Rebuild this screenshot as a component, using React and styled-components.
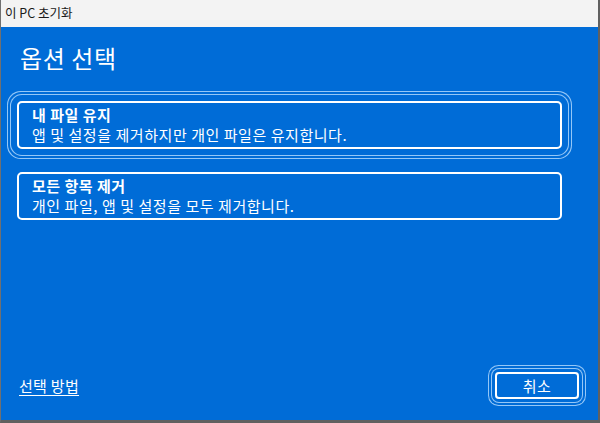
import styled, { createGlobalStyle } from "styled-components";

const BLUE = "#006cd7";
const RING = "#94c7f7";

const GlobalStyle = createGlobalStyle`
  html, body {
    margin: 0;
    padding: 0;
    background: #ffffff;
  }
  * {
    box-sizing: border-box;
  }
`;

// 창 전체
const Window = styled.div`
  width: 600px;
  height: 423px;
  display: flex;
  flex-direction: column;
  border-left: 1px solid #707070;
  border-right: 2px solid #606060;
  border-bottom: 3px solid #606060;
  font-family: "Noto Sans CJK KR", "Noto Sans", sans-serif;
  overflow: hidden;
`;

const TitleBar = styled.div`
  height: 27px;
  flex-shrink: 0;
  display: flex;
  align-items: center;
  padding-left: 4px;
  padding-bottom: 3px;
  background: #f3f3f3;
  color: #1a1a1a;
  font-size: 12.5px;
`;

const Body = styled.div`
  flex: 1;
  display: flex;
  flex-direction: column;
  background: ${BLUE};
  color: #ffffff;
  padding: 14px 36px 21px 16px;
`;

const Heading = styled.h1`
  margin: 0 0 26px 3px;
  font-size: 24px;
  font-weight: 400;
  line-height: 34px;
  letter-spacing: 0.6px;
`;

const OptionList = styled.div`
  display: flex;
  flex-direction: column;
  gap: 23px;
`;

const OptionCard = styled.button`
  display: flex;
  flex-direction: column;
  align-items: flex-start;
  width: 100%;
  height: 48px;
  padding: 2px 13px 0;
  background: transparent;
  color: #ffffff;
  border: 2px solid #ffffff;
  border-radius: 5px;
  font-family: inherit;
  text-align: left;
  cursor: pointer;
  box-shadow: ${(p) =>
    p.$focused
      ? `0 0 0 6px ${BLUE}, 0 0 0 7px ${RING}, 0 0 0 9px ${BLUE}, 0 0 0 10px ${RING}`
      : "none"};
`;

const OptionTitle = styled.div`
  font-size: 15px;
  font-weight: 700;
  line-height: 20px;
  letter-spacing: 0.5px;
`;

const OptionDesc = styled.div`
  font-size: 15px;
  line-height: 20px;
  letter-spacing: 0.55px;
`;

const Footer = styled.div`
  margin-top: auto;
  display: flex;
  align-items: center;
  justify-content: space-between;
  margin-right: -17px;
`;

const HelpLink = styled.a`
  margin-left: 2px;
  color: #ffffff;
  font-size: 15px;
  letter-spacing: 0.3px;
  text-decoration: underline;
  text-underline-offset: 3px;
  cursor: pointer;
`;

const CancelButton = styled.button`
  width: 84px;
  height: 27px;
  background: transparent;
  color: #ffffff;
  border: 2px solid #ffffff;
  border-radius: 4px;
  font-family: inherit;
  font-size: 15px;
  letter-spacing: 0.5px;
  cursor: pointer;
  box-shadow: 0 0 0 3px ${BLUE}, 0 0 0 4px ${RING}, 0 0 0 6px ${BLUE}, 0 0 0 7px ${RING};
`;

const options = [
  { title: "내 파일 유지", desc: "앱 및 설정을 제거하지만 개인 파일은 유지합니다.", focused: true },
  { title: "모든 항목 제거", desc: "개인 파일, 앱 및 설정을 모두 제거합니다.", focused: false },
];

export default function App() {
  return (
    <>
      <GlobalStyle />
      <Window>
        <TitleBar>이 PC 초기화</TitleBar>
        <Body>
          <Heading>옵션 선택</Heading>
          <OptionList>
            {options.map((opt) => (
              <OptionCard key={opt.title} $focused={opt.focused}>
                <OptionTitle>{opt.title}</OptionTitle>
                <OptionDesc>{opt.desc}</OptionDesc>
              </OptionCard>
            ))}
          </OptionList>
          <Footer>
            <HelpLink>선택 방법</HelpLink>
            <CancelButton>취소</CancelButton>
          </Footer>
        </Body>
      </Window>
    </>
  );
}
